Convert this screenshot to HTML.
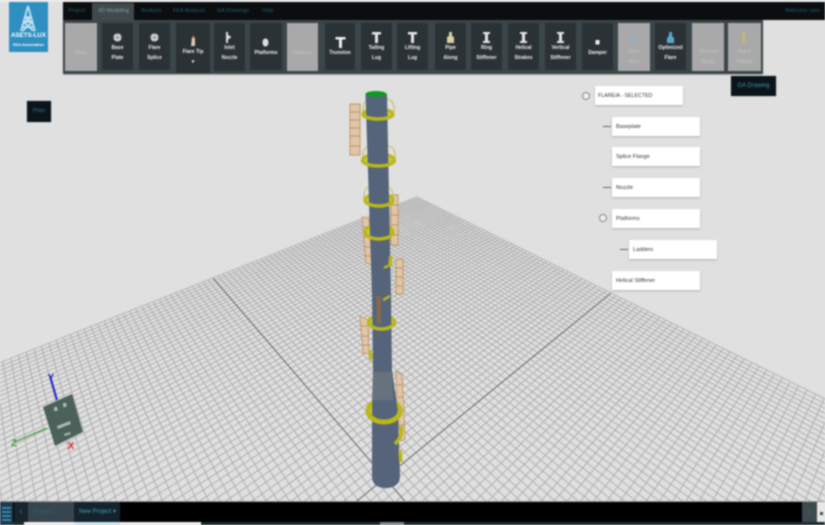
<!DOCTYPE html>
<html><head><meta charset="utf-8"><title>ASETS-LUX</title>
<style>
html,body{margin:0;padding:0;width:825px;height:525px;overflow:hidden;background:#e0e0e0;font-family:"Liberation Sans",sans-serif}
.a{position:absolute}
#stage{position:absolute;left:0;top:0;width:825px;height:525px;overflow:hidden;filter:blur(.7px)}
.m{position:absolute;top:5px;font-size:5.5px;color:#1f5f78;line-height:12px;white-space:nowrap}
.b{position:absolute;top:23px;height:47px;width:31px;background:#2b3236;color:#f0f0f0;font-size:5px;font-weight:bold;text-align:center;line-height:10px;white-space:nowrap}
.b svg{position:absolute;left:10px;top:9px;width:11px;height:11px}
.b span{position:absolute;left:0;right:0;top:20px}
.g{background:#a9a9a9;color:#bcbcbc;top:23px;height:48px}
.n{position:absolute;background:#fff;height:19px;width:88px;box-shadow:0 1px 2px rgba(0,0,0,.22);font-size:5.6px;color:#333;line-height:21px;text-indent:4px;white-space:nowrap;overflow:hidden}
.d{position:absolute;width:8px;height:1px;background:#666}
.c{position:absolute;width:6px;height:6px;border:1px solid #888;border-radius:50%;background:#eee}
</style></head><body>
<div id="stage">
<svg class="a" style="left:0;top:0" width="825" height="525" viewBox="0 0 825 525">
<path id="grid" fill="none" stroke="#adadad" stroke-width=".95"/>
<path id="axes" fill="none" stroke="#6f6f6f" stroke-width="1.100"/>
<path id="edge" fill="none" stroke="#b5b5b5" stroke-width=".7"/>
<!-- ladders -->
<g fill="#dfc6a8" stroke="#bf9264" stroke-width=".9">
<path d="M350 104h10v51h-10z M350 112h10M350 120h10M350 128h10M350 136h10M350 146h10"/>
<path d="M391 195h7v50h-7z M391 205h7M391 215h7M391 225h7M391 235h7"/>
<path d="M362 217l7 2 3 46-6-2z M363 227h7M364 237h7M365 247h7M365 256h7"/>
<path d="M396 259h7v35h-7z M396 268h7M396 277h7M396 286h7"/>
<path d="M360 316l8 4 1 34-6-1z M360 326h8M361 336h8M362 345h7"/>
<path d="M396 371l6 4 2 34 1 30-4 2-4-30z M397 385h6M398 397h6M399 410h6M400 425h5"/>
</g>
<!-- back rails -->
<g fill="none" stroke="#c2c15e" stroke-width="1.100">
<path d="M363 112c-1-10 5-13 8-13M394 112c1-10-4-13-7-13"/>
<path d="M363 158c-1-9 4-12 7-12M395 158c1-9-4-12-7-12"/>
<path d="M364 200c-1-10 3-13 6-13M393 200c1-10-3-13-6-13"/>
</g>
<!-- rings back -->
<g fill="#c8c840" stroke="#b9b71a" stroke-width="3">
<ellipse cx="378" cy="114" rx="15" ry="5"/>
<ellipse cx="378.500" cy="160" rx="16" ry="6"/>
<ellipse cx="379" cy="200" rx="14" ry="6"/>
<ellipse cx="379" cy="232" rx="14" ry="7"/>
<ellipse cx="381.500" cy="322" rx="13" ry="7"/>
<ellipse cx="384" cy="411" rx="16" ry="11" stroke-width="5"/>
</g>
<!-- tower -->
<path d="M365.500 94L387 94L391 295L392 370L398 412L400 476C400 484 394 488 386 488C377 488 372 484 372 476L372 415L373 370L372 295Z" fill="#55647a"/>
<path d="M373 372h19l1 28h-21z" fill="#66737f"/>
<path d="M376 296h5l0 28h-4z" fill="#86684c"/>
<ellipse cx="376" cy="94" rx="10.500" ry="3" fill="#0c9c22"/>
<!-- rings front -->
<g fill="none" stroke="#b9b71a" stroke-width="3.500">
<path d="M363 114A15 5 0 0 0 393 114"/>
<path d="M362.500 160A16 6 0 0 0 394.500 160"/>
<path d="M365 200A14 6 0 0 0 393 200"/>
<path d="M365 232A14 7 0 0 0 393 232"/>
<path d="M368.500 322A13 7 0 0 0 394.500 322"/>
<path d="M368 411A16 11 0 0 0 400 411" stroke-width="5"/>
<path d="M392 264c-3 2-5 2-8 4" stroke-width="2.500"/>
<path d="M390 296c-3 1-4 3-7 4" stroke-width="2.500"/>
<path d="M370 350l1 10"/>
<path d="M401 426c2 8-2 14-6 18"/>
<path d="M400 450l1 12"/>
<path d="M391 256l-1 8"/>
</g>
<!-- gizmo -->
<path d="M57 400L50 376" stroke="#2222cc" stroke-width="2"/>
<path d="M47 428L15 442" stroke="#4c9c4c" stroke-width="1.500"/>
<path d="M43 407L72 394L83 432L55 446Z" fill="#4b6159"/>
<g fill="#a9b9b2"><rect x="54" y="407" width="3.500" height="4"/><rect x="63" y="403" width="3.500" height="4"/><path d="M57 426l13-5 .8 3-13 5z"/><path d="M64 434l6-2 .6 2-6 2z"/></g>
<text x="47.500" y="381" font-size="10" font-weight="bold" fill="#2222cc">Y</text>
<text x="11" y="446" font-size="9" font-weight="bold" fill="#2e9c2e">Z</text>
<text x="67.500" y="449" font-size="10" font-weight="bold" fill="#e02828">X</text>
</svg>

<!-- logo -->
<div class="a" style="left:9px;top:2px;width:39px;height:50px;background:#2f8fc0;color:#fff;text-align:center;white-space:nowrap">
<svg class="a" style="left:10px;top:3px" width="18" height="27" viewBox="0 0 18 27"><path d="M9 1L2 26M9 1L16 26M6 12h6M4.500 17h9M3 22h12M6 12l6 5M12 12l-6 5M4.500 17l10 9M13.500 17l-10 9" stroke="#bfe2f2" stroke-width="1.800" fill="none"/></svg>
<div class="a" style="left:0;right:0;top:30px;font-size:6.200px;font-weight:bold;line-height:8px">ASETS-LUX</div>
<div class="a" style="left:0;right:0;top:40px;font-size:4px;font-weight:bold;line-height:6px">FEA Automation</div>
</div>

<!-- toolbar -->
<div class="a" style="left:63px;top:2px;width:700px;height:72px;background:#3b464a;box-shadow:0 1px 1px rgba(0,0,0,.25)"></div>
<div class="a" style="left:63px;top:2px;width:762px;height:18px;background:#0b0d0e"></div>
<div class="a" style="left:0;top:0;width:825px;height:2px;background:#eee"></div>
<div class="a" style="left:92px;top:3px;width:42px;height:18px;background:#42494c"></div>
<div class="m" style="left:68px">Project</div>
<div class="m" style="left:98px;color:#7fa0ac">3D Modeling</div>
<div class="m" style="left:141px">Analysis</div>
<div class="m" style="left:173px">FEA Analysis</div>
<div class="m" style="left:217px">GA Drawings</div>
<div class="m" style="left:262px">Help</div>
<div class="m" style="left:785px">Welcome user</div>

<div class="b g" style="left:65px;width:32px"><span style="top:25px">Plate</span></div>
<div class="b" style="left:102px"><svg viewBox="0 0 11 11"><circle cx="5.500" cy="5.500" r="4" fill="#ddd"/><path d="M5.500 2v7M2 5.500h7" stroke="#777" stroke-width=".7"/></svg><span>Base<br>Plate</span></div>
<div class="b" style="left:139px"><svg viewBox="0 0 11 11"><circle cx="5.500" cy="5.500" r="4" fill="#ddd"/><path d="M5.500 2v7M2 5.500h7" stroke="#777" stroke-width=".7"/></svg><span>Flare<br>Splice</span></div>
<div class="b" style="left:176px;width:34px;height:50px"><svg viewBox="0 0 11 11" style="left:12px;top:12px"><path d="M4 2.500l3 .5v8H3z" fill="#d8cbb8"/><path d="M5 0l2 3H4z" fill="#c9772b"/></svg><span style="top:24px">Flare Tip<br>▾</span></div>
<div class="b" style="left:214px;height:48px"><svg viewBox="0 0 11 11" style="left:9px"><path d="M3 0h2v11H3zM5 3l3.500 2L5 7.500z" fill="#ddd"/></svg><span>Inlet<br>Nozzle</span></div>
<div class="b" style="left:250px;width:32px"><svg viewBox="0 0 11 11" style="top:14px"><ellipse cx="5.500" cy="5.500" rx="3" ry="4" fill="#ddd"/></svg><span style="top:25px">Platforms</span></div>
<div class="b g" style="left:287px"><span style="top:25px">Ladders</span></div>
<div class="b" style="left:325px;width:30px"><svg viewBox="0 0 11 11" style="top:14px"><path d="M.5 0h10v2.500H7V11H4V2.500H.5z" fill="#eee"/></svg><span style="top:25px">Trunnion</span></div>
<div class="b" style="left:361px"><svg viewBox="0 0 11 11"><path d="M1 0h9v2.500H7V11H4V2.500H1z" fill="#e4e4e4"/></svg><span>Tailing<br>Lug</span></div>
<div class="b" style="left:397px"><svg viewBox="0 0 11 11"><path d="M1 0h9v2.500H7V11H4V2.500H1z" fill="#e4e4e4"/></svg><span>Lifting<br>Lug</span></div>
<div class="b" style="left:435px"><svg viewBox="0 0 11 11"><path d="M4 0h3v4l2 1v6H2V5l2-1z" fill="#d8d0a0"/></svg><span>Pipe<br>Along</span></div>
<div class="b" style="left:471px"><svg viewBox="0 0 11 11"><path d="M2 0h7v2H7v7h2v2H2V9h2V2H2z" fill="#e4e4e4"/></svg><span>Ring<br>Stiffener</span></div>
<div class="b" style="left:508px"><svg viewBox="0 0 11 11"><path d="M2 0h7v2H7v7h2v2H2V9h2V2H2z" fill="#e4e4e4"/></svg><span>Helical<br>Strakes</span></div>
<div class="b" style="left:545px"><svg viewBox="0 0 11 11"><path d="M2 0h7v2H7v7h2v2H2V9h2V2H2z" fill="#e4e4e4"/></svg><span>Vertical<br>Stiffener</span></div>
<div class="b" style="left:582px"><svg viewBox="0 0 11 11" style="top:16px"><rect x="3.500" y="1" width="4" height="4.500" fill="#eee"/></svg><span style="top:25px">Damper</span></div>
<div class="b g" style="left:618px;width:32px"><svg viewBox="0 0 11 11" style="top:12px"><path d="M5.500 0L2 11M5.500 0L9 11" stroke="#8fb0c8" stroke-width="1.400" fill="none"/></svg><span style="top:24px">Disc<br>Wire</span></div>
<div class="b" style="left:655px"><svg viewBox="0 0 11 11"><path d="M4 0h3v4l2 2v5H2V6l2-2z" fill="#5ba8cf"/></svg><span>Optimized<br>Flare</span></div>
<div class="b g" style="left:692px;width:32px"><span style="top:24px">Thermal<br>Study</span></div>
<div class="b g" style="left:728px;width:33px"><svg viewBox="0 0 11 11"><path d="M4.500 0h2.500v11H4.500z" fill="#c4b870"/></svg><span style="top:24px">Stack<br>Piping</span></div>

<!-- floating buttons -->
<div class="a" style="left:27px;top:101px;width:24px;height:21px;background:#0b141a;color:#2a6f88;font-size:5.500px;line-height:21px;text-align:center;box-shadow:0 0 1px #789">Plate</div>
<div class="a" style="left:731px;top:76px;width:45px;height:20px;background:#0b141a;color:#3a93a8;font-size:6px;line-height:20px;text-align:center;box-shadow:0 0 1px #789">GA Drawing</div>

<!-- tree -->
<div class="c" style="left:582px;top:92px"></div>
<div class="n" style="left:595px;top:86px;text-indent:3px;font-size:5.300px">FLARE/A - SELECTED</div>
<div class="d" style="left:603px;top:126px"></div>
<div class="n" style="left:612px;top:117px">Baseplate</div>
<div class="n" style="left:612px;top:147px">Splice Flange</div>
<div class="d" style="left:603px;top:187px"></div>
<div class="n" style="left:612px;top:178px">Nozzle</div>
<div class="c" style="left:599px;top:214px"></div>
<div class="n" style="left:612px;top:209px">Platforms</div>
<div class="d" style="left:620px;top:249px"></div>
<div class="n" style="left:629px;top:240px">Ladders</div>
<div class="n" style="left:612px;top:271px">Helical Stiffener</div>

<!-- bottom bar -->
<div class="a" style="left:0;top:501px;width:825px;height:1px;background:#999"></div>
<div class="a" style="left:0;top:502px;width:817px;height:20px;background:#000"></div>
<div class="a" style="left:0;top:522px;width:825px;height:3px;background:#1d2c33"></div>
<div class="a" style="left:0;top:502px;width:13px;height:23px;background:#1c3a4e"></div>
<div class="a" style="left:2px;top:507px;width:9px;height:2px;background:#3b87b0;box-shadow:0 4px 0 #3b87b0,0 8px 0 #3b87b0,0 12px 0 #3b87b0"></div>
<div class="a" style="left:14px;top:502px;width:14px;height:20px;background:#16242c;color:#2f6f8c;font-size:10px;line-height:20px;text-align:center;overflow:hidden">‹</div>
<div class="a" style="left:28px;top:502px;width:46px;height:20px;background:#37464e;color:#2b5f78;font-size:5.500px;line-height:20px;text-indent:6px;white-space:nowrap;overflow:hidden">Project1</div>
<div class="a" style="left:74px;top:502px;width:46px;height:20px;background:#14232c;color:#3f9dbf;font-size:6px;line-height:20px;text-indent:5px;white-space:nowrap;overflow:hidden">New Project ▾</div>
<div class="a" style="left:802px;top:502px;width:15px;height:20px;background:#3d4a4e;color:#2f6f8c;font-size:10px;line-height:20px;text-align:center;overflow:hidden">›</div>
<div class="a" style="left:817px;top:502px;width:8px;height:20px;background:#e8e8e8"></div>
<div class="a" style="left:820px;top:512px;width:3px;height:3px;background:#444"></div>
<div class="a" style="left:24px;top:522px;width:177px;height:3px;background:#f2f2f2"></div>
<div class="a" style="left:75px;top:522px;width:45px;height:3px;background:#cfeaf5"></div>
<div class="a" style="left:380px;top:522px;width:24px;height:3px;background:#7f8a8e"></div>
</div>
<script>
(function(){
var P=[[417,197],[611,293],[385,478],[213,278]];
var x0=P[0][0],y0=P[0][1],x1=P[1][0],y1=P[1][1],x2=P[2][0],y2=P[2][1],x3=P[3][0],y3=P[3][1];
var dx1=x1-x2,dx2=x3-x2,sx=x0-x1+x2-x3,dy1=y1-y2,dy2=y3-y2,sy=y0-y1+y2-y3;
var den=dx1*dy2-dx2*dy1;
var g=(sx*dy2-dx2*sy)/den,h=(dx1*sy-sx*dy1)/den;
var a=x1-x0+g*x1,b=x3-x0+h*x3,c=x0,d=y1-y0+g*y1,e=y3-y0+h*y3,f=y0;
function T(u,v){var w=g*u+h*v+1;return [(a*u+b*v+c)/w,(d*u+e*v+f)/w];}
function L(p,q){
  var t0=0,t1=1,dx=q[0]-p[0],dy=q[1]-p[1];
  var cs=[[-dx,p[0]],[dx,825-p[0]],[-dy,p[1]],[dy,525-p[1]]];
  for(var i=0;i<4;i++){
    var pp=cs[i][0],qq=cs[i][1];
    if(pp===0){if(qq<0)return '';continue;}
    var r=qq/pp;
    if(pp<0){if(r>t1)return '';if(r>t0)t0=r;}
    else{if(r<t0)return '';if(r<t1)t1=r;}
  }
  return 'M'+(p[0]+t0*dx).toFixed(1)+' '+(p[1]+t0*dy).toFixed(1)+'L'+(p[0]+t1*dx).toFixed(1)+' '+(p[1]+t1*dy).toFixed(1);
}
var N=54,s='';
for(var i=0;i<=2*N;i++){var t=i/N;s+=L(T(t,0),T(t,2))+L(T(0,t),T(2,t));}
document.getElementById('grid').setAttribute('d',s);
document.getElementById('axes').setAttribute('d',L(T(1,0),T(1,2))+L(T(0,1),T(2,1)));
document.getElementById('edge').setAttribute('d',L(T(0,2),T(0,0))+L(T(0,0),T(2,0)));
})();
</script>
</body></html>
